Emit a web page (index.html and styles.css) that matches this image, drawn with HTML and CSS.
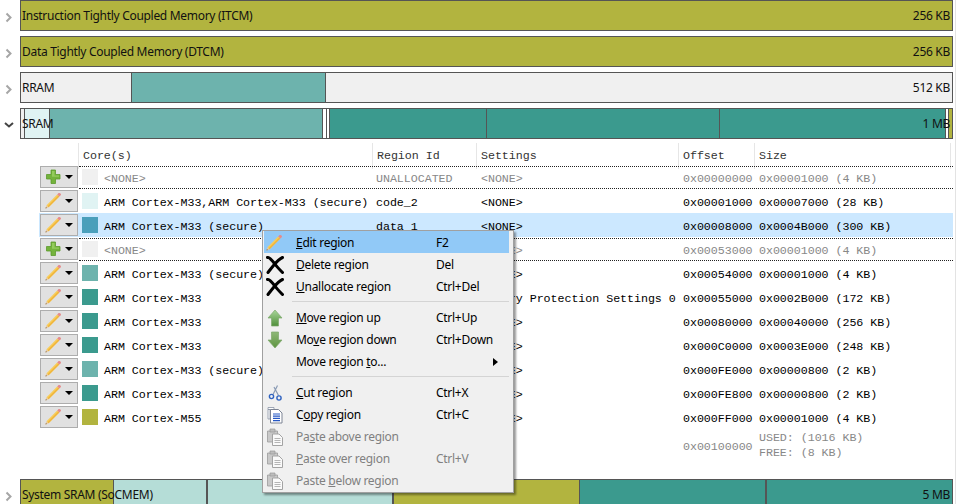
FILE: index.html
```html
<!DOCTYPE html>
<html>
<head>
	<meta charset="utf-8">
	<link rel="stylesheet" href="styles.css">
	<title>Memory regions</title>
</head>
<body>
	<svg class="defs" xmlns="http://www.w3.org/2000/svg">
		<defs>
			<linearGradient id="green_up" x1="0" y1="0" x2="0" y2="1">
				<stop offset="0" stop-color="#a9d69a"/>
				<stop offset="1" stop-color="#4f8f3a"/>
			</linearGradient>
			<linearGradient id="green_down" x1="0" y1="0" x2="0" y2="1">
				<stop offset="0" stop-color="#8fb878"/>
				<stop offset="1" stop-color="#5d9440"/>
			</linearGradient>
			<symbol id="i_closed" viewBox="0 0 20 31">
				<path d="M6.5 13.5 L10.5 17.5 L6.5 21.5" fill="none" stroke="#a6a6a6" stroke-width="2"/>
			</symbol>
			<symbol id="i_open" viewBox="0 0 20 31">
				<path d="M5 15 L9 18.5 L13 15" fill="none" stroke="#444" stroke-width="2"/>
			</symbol>
			<symbol id="i_pencil" viewBox="0 0 18 18">
				<path d="M0.5 16.5 L1.5 13.2 L3.6 15.3 Z" fill="#e8c9a0"/>
				<path d="M0.5 16.5 L0.9 15 L2 16.1 Z" fill="#8a6a3a"/>
				<path d="M1.5 13.2 L12.2 2.5 L14.3 4.6 L3.6 15.3 Z" fill="#f8cd58"/>
				<path d="M2.6 14.3 L13.3 3.6 L14.3 4.6 L3.6 15.3 Z" fill="#f0b43c"/>
				<path d="M12.2 2.5 L13.6 1.1 Q14.4 0.6 15.2 1.3 L15.8 1.9 Q16.3 2.6 15.7 3.2 L14.3 4.6 Z" fill="#e58b8b"/>
			</symbol>
			<symbol id="i_plus" viewBox="0 0 18 18">
				<path d="M6 2 H10.5 V6.5 H15 V11 H10.5 V15.5 H6 V11 H1.5 V6.5 H6 Z" fill="#74b33c" stroke="#5c9a2c" stroke-width="0.8"/>
				<path d="M7 3 H9.5 V7.5 H14 V8.8 H7 Z" fill="#93cc5b"/>
			</symbol>
			<symbol id="i_cross" viewBox="0 0 18 18">
				<path d="M1.5 1.5 C3 1 5 3 8.5 7.5 C11 11 14 14 16.5 16.5" fill="none" stroke="#000" stroke-width="3" stroke-linecap="round"/>
				<path d="M16.5 1.5 C13 3 10 6.5 7.5 9.5 C5.5 12 3.5 14.5 2 16.5" fill="none" stroke="#000" stroke-width="3" stroke-linecap="round"/>
			</symbol>
			<symbol id="i_up" viewBox="0 0 18 18">
				<path d="M9 1 L16 9 H12.5 V17 H5.5 V9 H2 Z" fill="url(#green_up)" stroke="#7da86c" stroke-width="0.7"/>
			</symbol>
			<symbol id="i_down" viewBox="0 0 18 18">
				<path d="M9 17 L16 9 H12.5 V1 H5.5 V9 H2 Z" fill="url(#green_down)" stroke="#7da86c" stroke-width="0.7"/>
			</symbol>
			<symbol id="i_cut" viewBox="0 0 18 18">
				<path d="M11.5 1.5 L7 10.5 M8 3 L12.5 11.5" fill="none" stroke="#8a9bb5" stroke-width="1.2"/>
				<circle cx="5.5" cy="12.5" r="2.1" fill="none" stroke="#2f62c0" stroke-width="1.4"/>
				<circle cx="13" cy="14" r="2.1" fill="none" stroke="#2f62c0" stroke-width="1.4"/>
			</symbol>
			<symbol id="i_copy" viewBox="0 0 18 18">
				<path d="M2 1.5 H8 V3.5 H2 Z M2 3.5 H4 V13 H2 Z" fill="#fff" stroke="#8a94a6" stroke-width="0.8"/>
				<path d="M4.5 3.5 H12.5 L16 7 V17 H4.5 Z" fill="#fff" stroke="#7c8494"/>
				<path d="M7 8 H14 M7 10.2 H14 M7 12.4 H14 M7 14.6 H14" stroke="#2456c4" stroke-width="1.2"/>
			</symbol>
			<symbol id="i_paste" viewBox="0 0 18 18">
				<path d="M1.5 3 H11.5 V14 H1.5 Z" fill="#c9c9c9" stroke="#9c9c9c" stroke-width="0.8"/>
				<path d="M4 1 H9 V4 H4 Z" fill="#bdbdbd" stroke="#999" stroke-width="0.7"/>
				<path d="M6.5 6 H13 L16.5 9.5 V17.5 H6.5 Z" fill="#fafafa" stroke="#a3a3a3"/>
				<path d="M8.5 10.5 H14.5 M8.5 12.5 H14.5 M8.5 14.5 H14.5" stroke="#b5b5b5"/>
			</symbol>
		</defs>
	</svg>

	<div class="panel">
		<div class="bar_row">
			<svg class="chevron"><use href="#i_closed"/></svg>
			<div class="bar">
				<div class="seg olive fill"></div>
				<span class="bar_label">Instruction Tightly Coupled Memory (ITCM)</span>
				<span class="bar_size">256 KB</span>
			</div>
		</div>
		<div class="bar_row">
			<svg class="chevron"><use href="#i_closed"/></svg>
			<div class="bar">
				<div class="seg olive fill"></div>
				<span class="bar_label">Data Tightly Coupled Memory (DTCM)</span>
				<span class="bar_size">256 KB</span>
			</div>
		</div>
		<div class="bar_row">
			<svg class="chevron"><use href="#i_closed"/></svg>
			<div class="bar">
				<div class="seg empty" style="width:111px"></div>
				<div class="seg teal" style="width:194px"></div>
				<div class="seg empty fill"></div>
				<span class="bar_label">RRAM</span>
				<span class="bar_size">512 KB</span>
			</div>
		</div>
		<div class="bar_row">
			<svg class="chevron"><use href="#i_open"/></svg>
			<div class="bar">
				<div class="seg empty" style="width:4px"></div>
				<div class="seg pale" style="width:25px"></div>
				<div class="seg teal" style="width:273px"></div>
				<div class="seg white" style="width:4px"></div>
				<div class="seg white" style="width:3px"></div>
				<div class="seg dark" style="width:157px"></div>
				<div class="seg dark" style="width:233px"></div>
				<div class="seg dark" style="width:226px"></div>
				<div class="seg white" style="width:3px"></div>
				<div class="seg olive fill"></div>
				<span class="bar_label">SRAM</span>
				<span class="bar_size">1 MB</span>
			</div>
		</div>

		<div class="regions">
			<div class="header">
				<div class="head_cell">Core(s)</div>
				<div class="head_cell">Region Id</div>
				<div class="head_cell">Settings</div>
				<div class="head_cell">Offset</div>
				<div class="head_cell">Size</div>
			</div>

			<div class="row free">
				<div class="btn"><svg class="btn_icon"><use href="#i_plus"/></svg><span class="caret"></span></div>
				<div class="cells">
					<div class="core"><span class="swatch c_empty"></span>&lt;NONE&gt;</div>
					<div>UNALLOCATED</div><div>&lt;NONE&gt;</div><div>0x00000000</div><div>0x00001000 (4 KB)</div>
				</div>
			</div>
			<div class="row">
				<div class="btn"><svg class="btn_icon"><use href="#i_pencil"/></svg><span class="caret"></span></div>
				<div class="cells">
					<div class="core"><span class="swatch c_pale"></span>ARM Cortex-M33,ARM Cortex-M33 (secure)</div>
					<div>code_2</div><div>&lt;NONE&gt;</div><div>0x00001000</div><div>0x00007000 (28 KB)</div>
				</div>
			</div>
			<div class="row selected">
				<div class="btn"><svg class="btn_icon"><use href="#i_pencil"/></svg><span class="caret"></span></div>
				<div class="cells">
					<div class="core"><span class="swatch c_blue"></span>ARM Cortex-M33 (secure)</div>
					<div>data_1</div><div>&lt;NONE&gt;</div><div>0x00008000</div><div>0x0004B000 (300 KB)</div>
				</div>
			</div>
			<div class="row free">
				<div class="btn"><svg class="btn_icon"><use href="#i_plus"/></svg><span class="caret"></span></div>
				<div class="cells">
					<div class="core"><span class="swatch c_empty"></span>&lt;NONE&gt;</div>
					<div>UNALLOCATED</div><div>&lt;NONE&gt;</div><div>0x00053000</div><div>0x00001000 (4 KB)</div>
				</div>
			</div>
			<div class="row">
				<div class="btn"><svg class="btn_icon"><use href="#i_pencil"/></svg><span class="caret"></span></div>
				<div class="cells">
					<div class="core"><span class="swatch c_teal"></span>ARM Cortex-M33 (secure)</div>
					<div></div><div>&lt;NONE&gt;</div><div>0x00054000</div><div>0x00001000 (4 KB)</div>
				</div>
			</div>
			<div class="row">
				<div class="btn"><svg class="btn_icon"><use href="#i_pencil"/></svg><span class="caret"></span></div>
				<div class="cells">
					<div class="core"><span class="swatch c_dark"></span>ARM Cortex-M33</div>
					<div></div><div>Memory Protection Settings 0</div><div>0x00055000</div><div>0x0002B000 (172 KB)</div>
				</div>
			</div>
			<div class="row">
				<div class="btn"><svg class="btn_icon"><use href="#i_pencil"/></svg><span class="caret"></span></div>
				<div class="cells">
					<div class="core"><span class="swatch c_dark"></span>ARM Cortex-M33</div>
					<div></div><div>&lt;NONE&gt;</div><div>0x00080000</div><div>0x00040000 (256 KB)</div>
				</div>
			</div>
			<div class="row">
				<div class="btn"><svg class="btn_icon"><use href="#i_pencil"/></svg><span class="caret"></span></div>
				<div class="cells">
					<div class="core"><span class="swatch c_dark"></span>ARM Cortex-M33</div>
					<div></div><div>&lt;NONE&gt;</div><div>0x000C0000</div><div>0x0003E000 (248 KB)</div>
				</div>
			</div>
			<div class="row">
				<div class="btn"><svg class="btn_icon"><use href="#i_pencil"/></svg><span class="caret"></span></div>
				<div class="cells">
					<div class="core"><span class="swatch c_teal"></span>ARM Cortex-M33 (secure)</div>
					<div></div><div>&lt;NONE&gt;</div><div>0x000FE000</div><div>0x00000800 (2 KB)</div>
				</div>
			</div>
			<div class="row">
				<div class="btn"><svg class="btn_icon"><use href="#i_pencil"/></svg><span class="caret"></span></div>
				<div class="cells">
					<div class="core"><span class="swatch c_dark"></span>ARM Cortex-M33</div>
					<div></div><div>&lt;NONE&gt;</div><div>0x000FE800</div><div>0x00000800 (2 KB)</div>
				</div>
			</div>
			<div class="row">
				<div class="btn"><svg class="btn_icon"><use href="#i_pencil"/></svg><span class="caret"></span></div>
				<div class="cells">
					<div class="core"><span class="swatch c_olive"></span>ARM Cortex-M55</div>
					<div></div><div>&lt;NONE&gt;</div><div>0x000FF000</div><div>0x00001000 (4 KB)</div>
				</div>
			</div>
			<div class="row total">
				<div class="cells">
					<div></div><div></div><div></div><div>0x00100000</div>
					<div class="usage">USED: (1016 KB)<br>FREE: (8 KB)</div>
				</div>
			</div>
		</div>

		<div class="bar_row">
			<svg class="chevron"><use href="#i_closed"/></svg>
			<div class="bar">
				<div class="seg olive" style="width:93px"></div>
				<div class="seg mint thick" style="width:94px"></div>
				<div class="seg mint thick" style="width:186px"></div>
				<div class="seg olive" style="width:186px"></div>
				<div class="seg dark thick" style="width:187px"></div>
				<div class="seg dark fill"></div>
				<span class="bar_label">System SRAM (SoCMEM)</span>
				<span class="bar_size">5 MB</span>
			</div>
		</div>
	</div>

	<div class="menu">
		<div class="item active"><svg class="menu_icon"><use href="#i_pencil"/></svg><span><u>E</u>dit region</span><span>F2</span></div>
		<div class="item"><svg class="menu_icon"><use href="#i_cross"/></svg><span><u>D</u>elete region</span><span>Del</span></div>
		<div class="item"><svg class="menu_icon"><use href="#i_cross"/></svg><span><u>U</u>nallocate region</span><span>Ctrl+Del</span></div>
		<div class="sep"></div>
		<div class="item"><svg class="menu_icon"><use href="#i_up"/></svg><span><u>M</u>ove region up</span><span>Ctrl+Up</span></div>
		<div class="item"><svg class="menu_icon"><use href="#i_down"/></svg><span>Mo<u>v</u>e region down</span><span>Ctrl+Down</span></div>
		<div class="item"><span></span><span>Move region <u>t</u>o...</span><span class="sub_arrow"></span></div>
		<div class="sep"></div>
		<div class="item"><svg class="menu_icon"><use href="#i_cut"/></svg><span><u>C</u>ut region</span><span>Ctrl+X</span></div>
		<div class="item"><svg class="menu_icon"><use href="#i_copy"/></svg><span>C<u>o</u>py region</span><span>Ctrl+C</span></div>
		<div class="item disabled"><svg class="menu_icon"><use href="#i_paste"/></svg><span>Pa<u>s</u>te above region</span><span></span></div>
		<div class="item disabled"><svg class="menu_icon"><use href="#i_paste"/></svg><span><u>P</u>aste over region</span><span>Ctrl+V</span></div>
		<div class="item disabled"><svg class="menu_icon"><use href="#i_paste"/></svg><span>Paste <u>b</u>elow region</span><span></span></div>
	</div>
</body>
</html>
```

FILE: styles.css
```css
html, body {
	margin: 0;
	height: 504px;
	overflow: hidden;
	background: #fff;
}
body {
	font-family: "Noto Sans", sans-serif;
	font-size: 12px;
	letter-spacing: -0.3px;
	color: #111;
}
.defs {
	position: absolute;
	width: 0;
	height: 0;
}
.panel {
	box-sizing: border-box;
	width: 956px;
	height: 510px;
	padding-right: 2px;
	border-right: 1px solid #e3e3e3;
}

/* memory bars */
.bar_row {
	display: flex;
	height: 31px;
	margin-bottom: 5px;
}
.chevron {
	flex: none;
	width: 20px;
	height: 31px;
}
.bar {
	position: relative;
	display: flex;
	flex: 1;
	box-sizing: border-box;
	border: 1px solid #555;
}
.seg {
	box-sizing: border-box;
	border-right: 1px solid #555;
}
.seg.fill {
	flex: 1;
	border-right: none;
}
.seg.thick {
	border-right-width: 2px;
}
.olive { background: #b2b43f; }
.teal { background: #6db3ad; }
.dark { background: #3b9a8e; }
.pale { background: #e0f3f3; }
.mint { background: #b5ddd7; }
.empty { background: #f0f0f0; }
.white { background: #fff; }
.bar_label, .bar_size {
	position: absolute;
	top: 0;
	line-height: 29px;
}
.bar_label { left: 1px; }
.bar_size { right: 2px; }

/* region table */
.regions {
	box-sizing: border-box;
	height: 340px;
	margin-top: -5px;
	padding-top: 4px;
	font-family: "Liberation Mono", monospace;
	font-size: 11.67px;
	letter-spacing: -0.04px;
	color: #000;
}
.header {
	display: grid;
	grid-template-columns: 294px 104px 202px 76px 197px;
	height: 22px;
	margin-left: 78px;
	color: #333;
	line-height: 26px;
}
.head_cell {
	padding-left: 4px;
	border-left: 1px solid #e6e6e6;
}
.head_cell:last-child {
	border-right: 1px solid #e6e6e6;
}
.row {
	display: flex;
	height: 24px;
	margin-left: 39px;
	line-height: 29px;
}
.row.selected {
	background: #cce8ff;
}
.row.free {
	color: #888;
}
.btn {
	display: flex;
	align-items: center;
	box-sizing: border-box;
	flex: none;
	width: 38px;
	height: 22px;
	margin: 1px;
	padding-left: 4px;
	background: #e1e1e1;
	border: 1px solid #adadad;
}
.btn_icon {
	flex: none;
	width: 18px;
	height: 18px;
}
.caret {
	width: 0;
	height: 0;
	margin-left: 2px;
	border-left: 4px solid transparent;
	border-right: 4px solid transparent;
	border-top: 4px solid #000;
}
.cells {
	display: grid;
	flex: 1;
	grid-template-columns: 297px 105px 202px 76px 1fr;
	grid-auto-rows: 24px;
	white-space: nowrap;
}
.row.free .cells {
	box-sizing: border-box;
	height: 23px;
	margin-top: 1px;
	border-top: 1px dotted #222;
	border-bottom: 1px dotted #222;
	grid-auto-rows: 21px;
	line-height: 24px;
}
.core {
	display: flex;
	padding-left: 3px;
}
.swatch {
	flex: none;
	width: 16px;
	height: 16px;
	margin: 4px 6px 0 0;
}
.row.free .swatch {
	margin-top: 2px;
}
.c_empty { background: #f0f0f0; }
.c_pale { background: #e0f3f3; }
.c_blue { background: #4a9fbb; }
.c_teal { background: #6db3ad; }
.c_dark { background: #3b9a8e; }
.c_olive { background: #b2b43f; }
.row.total {
	height: 34px;
	margin-left: 79px;
	color: #888;
	line-height: 36px;
}
.row.total .cells {
	grid-auto-rows: 34px;
}
.usage {
	padding-top: 2px;
	line-height: 15px;
}

/* context menu */
.menu {
	position: absolute;
	left: 262px;
	top: 230px;
	box-sizing: border-box;
	width: 252px;
	height: 263px;
	padding: 0 4px 1px 1px;
	background: #f0f0f0;
	border: 1px solid #a0a0a0;
	box-shadow: 2px 2px 2px rgba(0, 0, 0, 0.4);
	color: #000;
	letter-spacing: -0.28px;
}
.item {
	display: grid;
	grid-template-columns: 32px 140px 1fr;
	align-items: center;
	height: 22px;
	line-height: 24px;
}
.item.active {
	background: #91c9f7;
}
.item.disabled {
	color: #808080;
}
.menu_icon {
	width: 18px;
	height: 18px;
	margin-left: 2px;
}
.sep {
	height: 1px;
	margin: 4px 0 4px 28px;
	background: #d4d4d4;
}
.sub_arrow {
	justify-self: end;
	width: 0;
	height: 0;
	margin-right: 11px;
	border-top: 4px solid transparent;
	border-bottom: 4px solid transparent;
	border-left: 5px solid #000;
}
```
